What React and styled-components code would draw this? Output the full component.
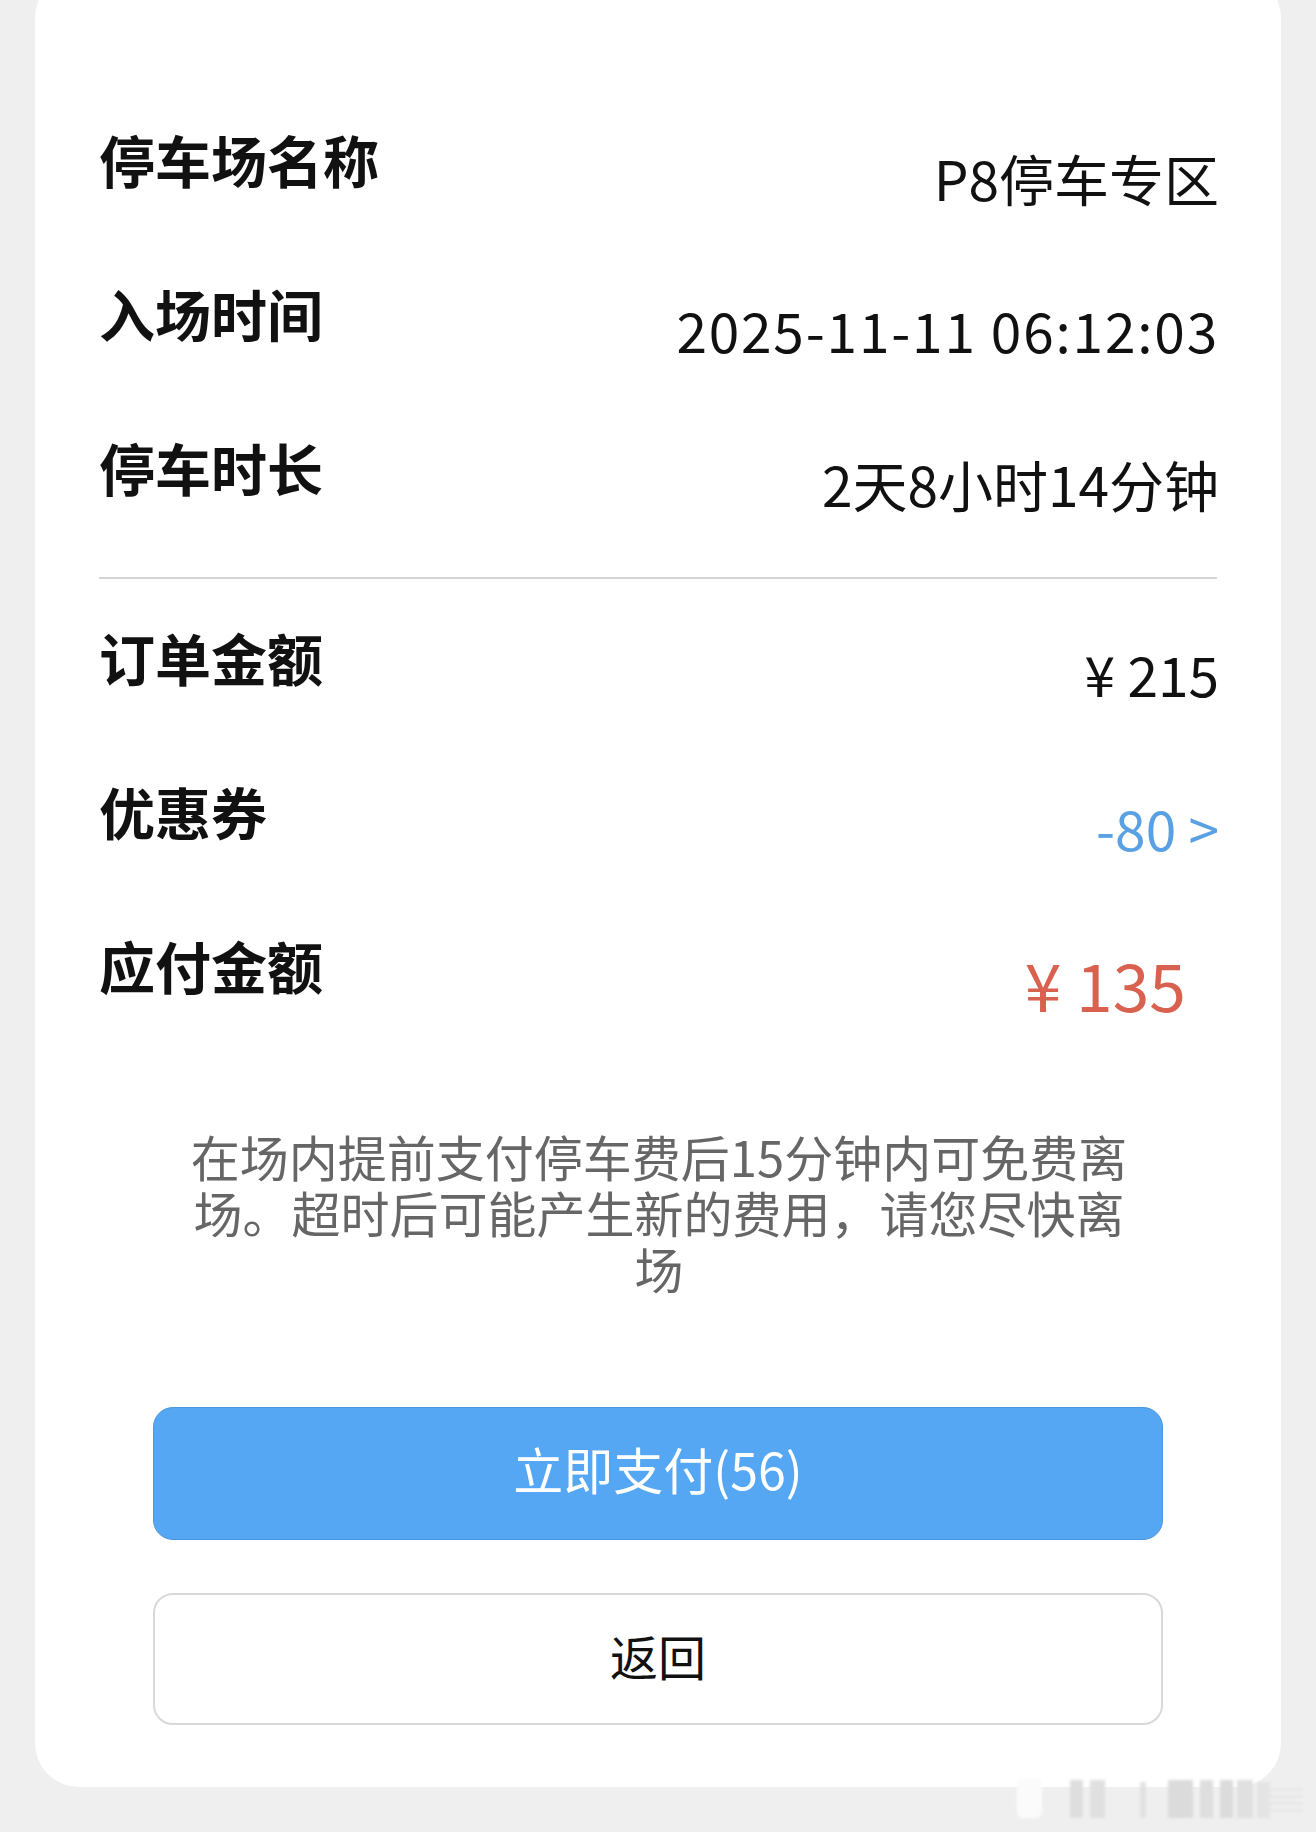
import React from 'react';
import styled, { createGlobalStyle } from 'styled-components';

const GlobalStyle = createGlobalStyle`
  html, body {
    margin: 0;
    padding: 0;
    background: #efefef;
  }
  body {
    font-family: "Noto Sans CJK SC", "Noto Sans", sans-serif;
    color: #111;
  }
`;

const Page = styled.div`
  position: relative;
  height: 1832px;
  padding: 0 35px;
  box-sizing: border-box;
  overflow: hidden;
`;

const Card = styled.div`
  margin-top: -26px;
  background: #fff;
  border-radius: 44px;
  padding: 150px 62px 62px 64px;
  display: flex;
  flex-direction: column;
`;

const Group = styled.div`
  display: flex;
  flex-direction: column;
  gap: 34px;
`;

const Row = styled.div`
  height: 120px;
  display: flex;
  justify-content: space-between;
  align-items: flex-start;
`;

const Label = styled.div`
  font-size: 56px;
  font-weight: 700;
  line-height: 70px;
  color: #111;
`;

const Value = styled.div`
  font-size: ${p => p.size || 55}px;
  line-height: 70px;
  margin-top: ${p => p.offset || 16}px;
  margin-right: ${p => p.inset || 0}px;
  color: ${p => p.color || '#111'};
  letter-spacing: ${p => p.spacing || 0}px;
  white-space: nowrap;
`;

const Divider = styled.hr`
  border: none;
  height: 2px;
  background: #d5d5d5;
  margin: 25px 2px 43px 0;
`;

const Notice = styled.p`
  margin: 78px auto 0;
  width: 19.5em;
  font-size: 49px;
  line-height: 56px;
  color: #666;
  text-align: center;
`;

const Actions = styled.div`
  margin: 111px 56px 0 54px;
  display: flex;
  flex-direction: column;
  gap: 53px;
`;

const Button = styled.button`
  height: ${p => (p.primary ? 133 : 132)}px;
  padding: 0 0 ${p => (p.primary ? 11 : 8)}px;
  border-radius: 20px;
  font-family: inherit;
  font-size: ${p => (p.primary ? 50 : 48)}px;
  background: ${p => (p.primary ? '#55a7f4' : '#fff')};
  color: ${p => (p.primary ? '#fff' : '#111')};
  border: ${p => (p.primary ? '1px solid #4b97dd' : '2px solid #d9d9d9')};
  cursor: pointer;
`;

const Watermark = styled.svg`
  position: absolute;
  left: 1008px;
  top: 1768px;
`;

const details = [
  { label: '停车场名称', value: 'P8停车专区', offset: 18 },
  { label: '入场时间', value: '2025-11-11 06:12:03', spacing: 1.8 },
  { label: '停车时长', value: '2天8小时14分钟' }
];

const amounts = [
  { label: '订单金额', value: '¥ 215' },
  { label: '优惠券', value: '-80 >', color: '#5aa1e3' },
  { label: '应付金额', value: '¥ 135', color: '#d9614f', size: 66, offset: 18, inset: 33 }
];

function renderRows(rows) {
  return rows.map(r => (
    <Row key={r.label}>
      <Label>{r.label}</Label>
      <Value
        color={r.color}
        size={r.size}
        offset={r.offset}
        inset={r.inset}
        spacing={r.spacing}
      >
        {r.value}
      </Value>
    </Row>
  ));
}

export default function App() {
  return (
    <Page>
      <GlobalStyle />
      <Card>
        <Group>{renderRows(details)}</Group>
        <Divider />
        <Group>{renderRows(amounts)}</Group>
        <Notice>
          在场内提前支付停车费后15分钟内可免费离场。超时后可能产生新的费用，请您尽快离场
        </Notice>
        <Actions>
          <Button primary>立即支付(56)</Button>
          <Button>返回</Button>
        </Actions>
      </Card>
      {/* faint watermark in the corner */}
      <Watermark width="300" height="60" viewBox="0 0 300 60">
        <defs>
          <filter id="soft">
            <feGaussianBlur stdDeviation="1.8" />
          </filter>
        </defs>
        <g filter="url(#soft)">
          <rect x="9" y="10" width="25" height="40" rx="6" fill="#fbfbfb" />
          <rect x="62" y="12" width="13" height="38" fill="#dedede" />
          <rect x="82" y="12" width="15" height="38" fill="#e0e0e0" />
          <rect x="132" y="14" width="6" height="36" fill="#e2e2e2" />
          <rect x="160" y="12" width="25" height="38" fill="#dbdbdb" />
          <rect x="192" y="12" width="13" height="38" fill="#dedede" />
          <rect x="212" y="12" width="13" height="38" fill="#dbdbdb" />
          <rect x="229" y="12" width="16" height="38" fill="#e0e0e0" />
          <rect x="249" y="14" width="13" height="36" fill="#e4e4e4" />
          <rect x="262" y="20" width="33" height="3" fill="#e6e6e6" />
          <rect x="262" y="27" width="33" height="3" fill="#e6e6e6" />
          <rect x="262" y="34" width="33" height="3" fill="#e6e6e6" />
          <rect x="262" y="41" width="33" height="3" fill="#e6e6e6" />
        </g>
      </Watermark>
    </Page>
  );
}
